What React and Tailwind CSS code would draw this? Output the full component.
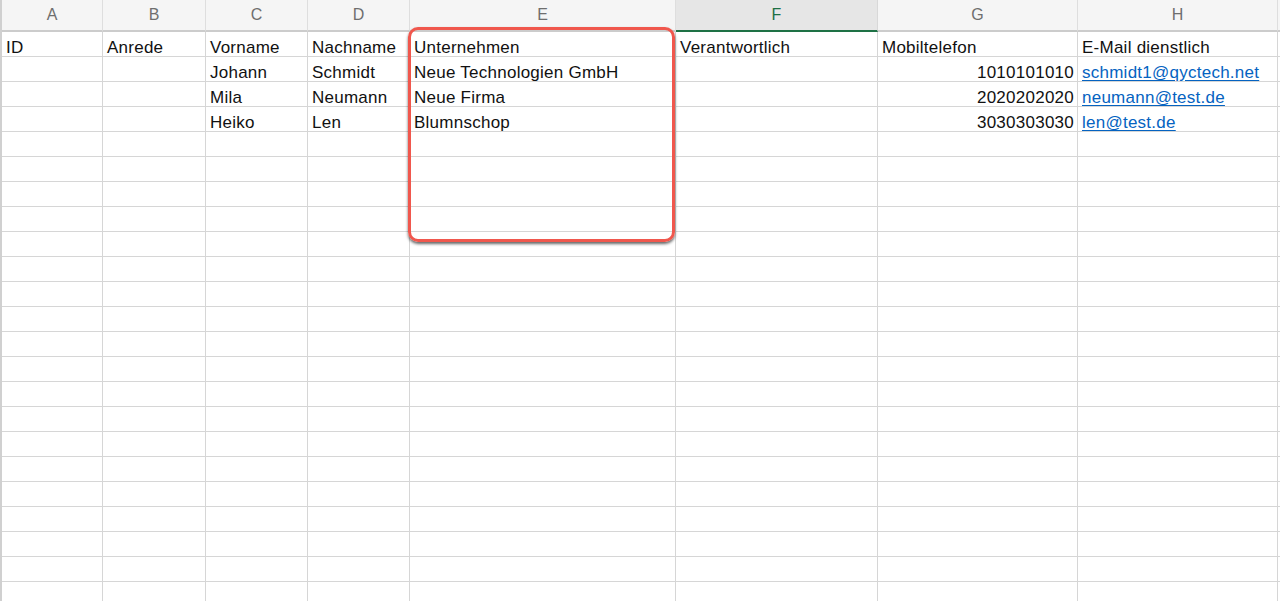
import React from "react";

const cols = [
  { key: "A", w: "w-[101px]" },
  { key: "B", w: "w-[103px]" },
  { key: "C", w: "w-[102px]" },
  { key: "D", w: "w-[102px]" },
  { key: "E", w: "w-[266px]" },
  { key: "F", w: "w-[202px]" },
  { key: "G", w: "w-[200px]" },
  { key: "H", w: "w-[200px]" },
];

const data = [
  ["ID", "Anrede", "Vorname", "Nachname", "Unternehmen", "Verantwortlich", "Mobiltelefon", "E-Mail dienstlich"],
  ["", "", "Johann", "Schmidt", "Neue Technologien GmbH", "", "1010101010", "schmidt1@qyctech.net"],
  ["", "", "Mila", "Neumann", "Neue Firma", "", "2020202020", "neumann@test.de"],
  ["", "", "Heiko", "Len", "Blumnschop", "", "3030303030", "len@test.de"],
];

function Cell({ col, value, rowIdx }) {
  const isNum = rowIdx > 0 && col.key === "G" && value;
  const isMail = rowIdx > 0 && col.key === "H" && value;
  return (
    <div
      className={`${col.w} shrink-0 h-[25px] border-r border-b border-[#d6d6d6] flex items-end overflow-visible whitespace-nowrap ${
        isNum ? "justify-end pr-[3px]" : "pl-[4px]"
      }`}
    >
      {isMail ? (
        <span className="leading-none text-[#0563c1] underline underline-offset-[2px]">{value}</span>
      ) : (
        <span className="leading-none">{value}</span>
      )}
    </div>
  );
}

export default function App() {
  const rows = [];
  for (let i = 0; i < 23; i++) rows.push(data[i] || ["", "", "", "", "", "", "", ""]);
  return (
    <div
      className="relative w-[1280px] h-[601px] overflow-hidden bg-white text-[17px] tracking-[0.25px] text-[#111]"
      style={{ fontFamily: '"Liberation Sans", Arial, sans-serif' }}
    >
      <div className="flex flex-col border-l-2 border-[#d0d0d0] h-full">
        {/* column letters */}
        <div className="flex h-[32px] shrink-0">
          {cols.map((c) => (
            <div
              key={c.key}
              className={`${c.w} shrink-0 h-[32px] flex items-center justify-center text-[16px] tracking-normal border-r ${
                c.key === "F"
                  ? "bg-[#e6e6e6] text-[#1d7044] border-b-2 border-b-[#1e7145] border-r-[#d8d8d8]"
                  : "bg-[#f5f5f5] text-[#6e6e6e] border-b-2 border-b-[#cccccc] border-r-[#dedede]"
              }`}
            >
              {c.key}
            </div>
          ))}
          <div className="flex-1 h-[32px] bg-[#f5f5f5] border-b-2 border-[#cccccc]" />
        </div>
        {rows.map((r, ri) => (
          <div key={ri} className="flex shrink-0">
            {cols.map((c, ci) => (
              <Cell key={c.key} col={c} value={r[ci]} rowIdx={ri} />
            ))}
            <div className="flex-1 h-[25px] border-b border-[#d6d6d6]" />
          </div>
        ))}
      </div>
      {/* red highlight box */}
      <div className="absolute left-[408px] top-[27px] w-[267px] h-[215px] rounded-[10px] border-[3px] border-[#f0574d] shadow-[0_2px_3px_rgba(0,0,0,0.6)] pointer-events-none" />
    </div>
  );
}
